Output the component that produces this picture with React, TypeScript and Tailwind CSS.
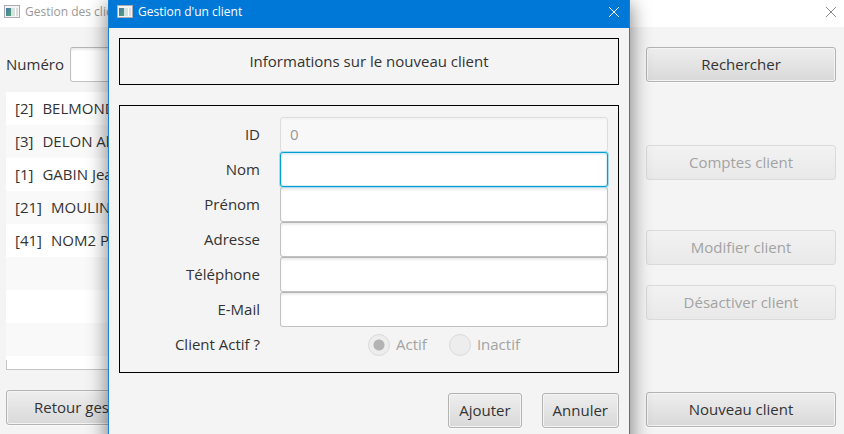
import type { ReactNode } from 'react';

const FIELD =
  'h-[35px] w-full min-w-0 rounded-[3px] border border-[#c2c2c2] border-t-[#b5b5b5] bg-white px-[9px] pb-0.5 text-[15px] text-[#333] shadow-[inset_0_2px_2px_#ececec] outline-none';
const DISABLED_FIELD =
  'h-[35px] w-full min-w-0 rounded-[3px] border border-[#dddddd] bg-[#f8f8f8] px-[9px] pb-0.5 text-[15px] text-[#999] shadow-[inset_0_2px_2px_#f3f3f3]';
const FOCUSED_FIELD =
  'relative h-[35px] w-full min-w-0 rounded-[3px] border border-[#039ed3] bg-white px-[9px] pb-0.5 text-[15px] text-[#333] shadow-[0_0_0_1px_#a8dcee,inset_0_0_0_1px_#d9eff7,inset_0_2px_2px_#e6f1f5] outline-none';

const CLIENTS = [
  { id: 2, name: 'BELMONDO Jean' },
  { id: 3, name: 'DELON Alain' },
  { id: 1, name: 'GABIN Jean' },
  { id: 21, name: 'MOULIN Jean' },
  { id: 41, name: 'NOM2 Prenom2' },
];

const FIELDS = [
  { id: 'client-id', label: 'ID', value: '0', style: DISABLED_FIELD, disabled: true },
  { id: 'nom', label: 'Nom', value: '', style: FOCUSED_FIELD, disabled: false },
  { id: 'prenom', label: 'Prénom', value: '', style: FIELD, disabled: false },
  { id: 'adresse', label: 'Adresse', value: '', style: FIELD, disabled: false },
  { id: 'telephone', label: 'Téléphone', value: '', style: FIELD, disabled: false },
  { id: 'email', label: 'E-Mail', value: '', style: FIELD, disabled: false },
];

function AppIcon() {
  return (
    <svg width="16" height="14" viewBox="0 0 16 14" aria-hidden="true" className="shrink-0">
      <defs>
        <linearGradient id="pane" x1="0" y1="0" x2="1" y2="1">
          <stop offset="0" stopColor="#4b77a8" />
          <stop offset="1" stopColor="#4fa477" />
        </linearGradient>
      </defs>
      <rect x="0.5" y="0.5" width="15" height="12" fill="#f4f4f4" stroke="#a9adb3" />
      <rect x="2" y="3" width="5" height="8" fill="url(#pane)" />
      <rect x="7" y="3" width="4" height="8" fill="#d5e4e2" />
      <rect x="11" y="3" width="1" height="8" fill="#ffffff" />
      <rect x="12" y="3" width="2" height="8" fill="#dcdcdc" />
    </svg>
  );
}

function CloseButton({ className }: { className: string }) {
  return (
    <button type="button" aria-label="Fermer" className={className}>
      <svg width="12" height="12" viewBox="0 0 12 12" fill="none" stroke="currentColor" aria-hidden="true">
        <path d="M1 1 11 11M11 1 1 11" />
      </svg>
    </button>
  );
}

function Button({ children, disabled = false, className = '' }: { children: ReactNode; disabled?: boolean; className?: string }) {
  const tone = disabled
    ? 'border-[#dadada] from-[#f2f2f2] to-[#e9e9e9] text-[#a3a3a3]'
    : 'border-[#b3b3b3] from-[#eeeeee] to-[#d9d9d9] text-[#333] shadow-[inset_0_0_0_1px_#f4f4f4,0_1px_0_#fafafa]';
  return (
    <button
      type="button"
      disabled={disabled}
      className={`h-[35px] rounded-[3px] border bg-linear-to-b pb-0.5 text-[15px] leading-5 whitespace-nowrap ${tone} ${className}`}
    >
      {children}
    </button>
  );
}

function ClientsWindow() {
  return (
    <div className="flex min-h-screen flex-col">
      <header className="flex h-[27px] items-center justify-between bg-white pr-[7px] pb-[3px] pl-1 text-[#999]">
        <div className="flex items-center gap-[5px]">
          <AppIcon />
          <h1 className="text-xs leading-4">Gestion des clients</h1>
        </div>
        <CloseButton className="text-[#8a8a8a]" />
      </header>
      <main className="flex flex-1 gap-[30px] pt-5 pr-2 pl-1.5">
        <section className="min-w-0 flex-1">
          <div className="flex items-center">
            <label htmlFor="numero" className="w-16 shrink-0 pb-0.5 text-[15px] leading-5">
              Numéro
            </label>
            <input id="numero" className={FIELD} />
          </div>
          <ul className="mt-2.5 h-[278px] overflow-hidden border-b border-[#c4c4c4] bg-white">
            {CLIENTS.map((c) => (
              <li key={c.id} className="flex h-[33px] items-center gap-[9px] px-[9px] pb-0.5 text-[15px] leading-5 whitespace-nowrap even:bg-[#f9f9f9]">
                <span>[{c.id}]</span>
                <span>{c.name}</span>
              </li>
            ))}
            <li className="h-[33px] bg-[#f9f9f9]" />
            <li className="h-[33px]" />
            <li className="h-[33px] bg-[#f9f9f9]" />
            <li className="mt-1 h-2.5 border-l border-[#c4c4c4]" />
          </ul>
          <Button className="mt-5 px-[27px]">Retour gestion agence</Button>
        </section>
        <aside className="flex w-[190px] shrink-0 flex-col">
          <Button>Rechercher</Button>
          <Button disabled className="mt-[63px]">Comptes client</Button>
          <Button disabled className="mt-[50px]">Modifier client</Button>
          <Button disabled className="mt-5">Désactiver client</Button>
          <Button className="mt-[72px]">Nouveau client</Button>
        </aside>
      </main>
    </div>
  );
}

function ClientDialog() {
  return (
    <div
      role="dialog"
      aria-labelledby="dialog-title"
      className="absolute top-0 right-[214px] left-[108px] border-x border-[#1a80d2] bg-[#f4f4f4] pb-5 shadow-[0_6px_18px_2px_rgba(0,0,0,0.45)]"
    >
      <header className="flex h-7 items-center justify-between bg-[#0078d7] pr-[9px] pb-1 pl-2 text-white">
        <div className="flex items-center gap-[5px]">
          <AppIcon />
          <h2 id="dialog-title" className="text-xs leading-4">Gestion d'un client</h2>
        </div>
        <CloseButton className="text-white" />
      </header>
      <form className="px-2.5 pt-2.5">
        <p className="flex h-[47px] items-center justify-center border border-black pb-0.5 text-[15px] leading-5">
          Informations sur le nouveau client
        </p>
        <div className="mt-5 border border-black px-2.5 pt-[11px] pb-2.5">
          {FIELDS.map((f) => (
            <div key={f.id} className="flex items-center gap-5">
              <label htmlFor={f.id} className="w-[130px] shrink-0 pb-0.5 text-right text-[15px] leading-5">
                {f.label}
              </label>
              <input id={f.id} defaultValue={f.value} disabled={f.disabled} className={f.style} />
            </div>
          ))}
          <div role="radiogroup" aria-labelledby="etat" className="flex h-[35px] items-center gap-5">
            <span id="etat" className="w-[130px] shrink-0 pb-0.5 text-right text-[15px] leading-5">
              Client Actif ?
            </span>
            <div className="flex flex-1 justify-center gap-[22px] text-[15px] leading-5 text-[#a3a3a3]">
              <label className="flex items-center gap-1.5">
                <input
                  type="radio"
                  name="etat"
                  defaultChecked
                  disabled
                  className="size-[22px] appearance-none rounded-full border border-[#dadada] bg-[radial-gradient(circle,#b3b3b3_5px,#ededed_6px)]"
                />
                <span className="pb-0.5">Actif</span>
              </label>
              <label className="flex items-center gap-1.5">
                <input
                  type="radio"
                  name="etat"
                  disabled
                  className="size-[22px] appearance-none rounded-full border border-[#dadada] bg-[#ededed]"
                />
                <span className="pb-0.5">Inactif</span>
              </label>
            </div>
          </div>
        </div>
        <div className="mt-5 flex justify-end gap-5">
          <Button className="px-2.5">Ajouter</Button>
          <Button className="px-2.5">Annuler</Button>
        </div>
      </form>
    </div>
  );
}

export default function App() {
  return (
    <div className="relative h-screen overflow-hidden bg-[#f4f4f4] font-['Open_Sans','Noto_Sans',sans-serif] text-[#333]">
      <ClientsWindow />
      <ClientDialog />
    </div>
  );
}
